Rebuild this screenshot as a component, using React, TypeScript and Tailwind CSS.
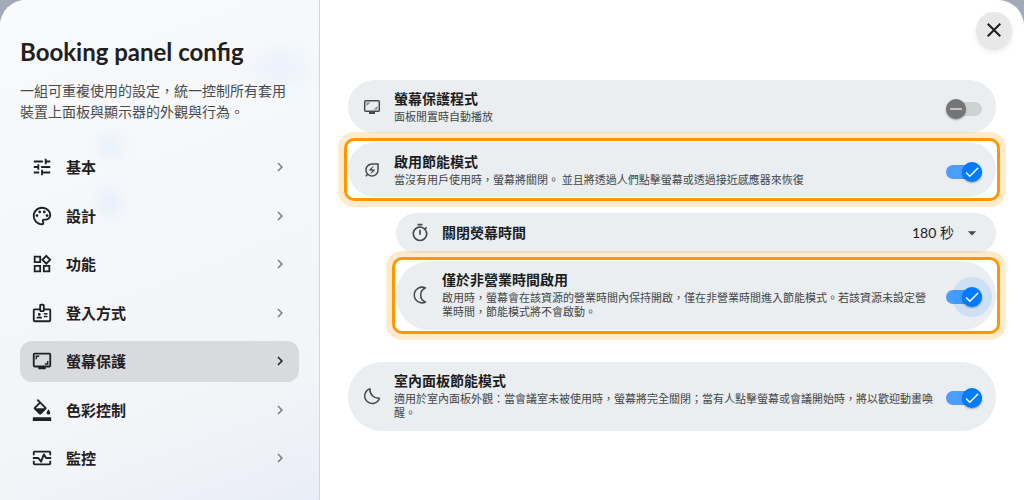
import React, { useState } from "react";
import clsx from "clsx";
import {
	MdArrowDropDown,
	MdCheck,
	MdChevronRight,
	MdClose,
	MdFormatColorFill,
	MdOutlineBadge,
	MdOutlineEnergySavingsLeaf,
	MdOutlinePalette,
	MdOutlineScreenshotMonitor,
	MdOutlineTimer,
	MdOutlineWidgets,
	MdRemove,
	MdTune,
} from "react-icons/md";

type IconProps = { className?: string };

const MonitoringIcon = ({ className }: IconProps) => (
	<svg viewBox="0 0 24 24" fill="none" stroke="currentColor" strokeWidth="2" className={className}>
		<path d="M3 9V6a1 1 0 0 1 1-1h16a1 1 0 0 1 1 1v3M3 15v3a1 1 0 0 0 1 1h16a1 1 0 0 0 1-1v-3" />
		<path d="M2 12h6l3 4 3-8 2.500 4H22" strokeLinejoin="round" />
	</svg>
);

const MonitorIcon = ({ className }: IconProps) => (
	<svg viewBox="0 0 20 20" fill="none" stroke="currentColor" className={className}>
		<rect x="2.700" y="3.700" width="14.600" height="10.600" rx="1" strokeWidth="1.500" />
		<path d="M4.500 5.500h4l-4 3.500zM15.500 12.500h-4l4-3.500z" fill="currentColor" stroke="none" opacity="0.6" />
		<path d="M7 16h6" strokeWidth="2" />
	</svg>
);

const NightIcon = ({ className }: IconProps) => (
	<svg viewBox="0 0 20 20" fill="none" stroke="currentColor" strokeWidth="1.5" strokeLinejoin="round" className={className}>
		<path d="M15.500 3A7.800 7.800 0 1 0 15.500 17A7.500 7.500 0 0 1 15.500 3z" />
	</svg>
);

const MoonIcon = ({ className }: IconProps) => (
	<svg viewBox="0 0 20 20" fill="none" stroke="currentColor" strokeWidth="1.5" strokeLinejoin="round" className={className}>
		<path d="M8 2.800A7.500 7.500 0 1 0 17.400 12.200A8.500 8.500 0 0 1 8 2.800z" />
	</svg>
);

const LeafIcon = ({ className }: IconProps) => (
	<MdOutlineEnergySavingsLeaf className={clsx("p-px", className)} />
);

const navItems = [
	{ name: "基本", hash: "#basic", Icon: MdTune },
	{ name: "設計", hash: "#design", Icon: MdOutlinePalette },
	{ name: "功能", hash: "#features", Icon: MdOutlineWidgets },
	{ name: "登入方式", hash: "#login", Icon: MdOutlineBadge },
	{ name: "螢幕保護", hash: "#screensaver", Icon: MdOutlineScreenshotMonitor },
	{ name: "色彩控制", hash: "#colors", Icon: MdFormatColorFill },
	{ name: "監控", hash: "#monitoring", Icon: MonitoringIcon },
];

function Sidebar() {
	const [active, setActive] = useState("#screensaver");

	return (
		<aside className="relative w-80 shrink-0 overflow-hidden border-r border-[#d3d5d9] bg-linear-160 from-[#f9fafb] via-[#f3f4f8] via-80% to-[#e9edf7] px-5 pt-9">
			<div className="absolute top-14 left-64 h-6 w-12 rounded-full bg-blue-200/30 blur-md"></div>
			<div className="absolute top-34 left-25 size-5 rounded-full bg-blue-200/35 blur-sm"></div>
			<div className="absolute top-48 left-25 size-5 rounded-full bg-blue-200/40 blur-sm"></div>

			<div className="relative">
				<h1 className="text-2xl font-bold text-[#1f2022]">Booking panel config</h1>
				<p className="mt-3 text-sm leading-[21px] text-[#4a4b4e]">
					一組可重複使用的設定，統一控制所有套用裝置上面板與顯示器的外觀與行為。
				</p>
				<nav className="mt-[25px] flex flex-col gap-2">
					{navItems.map(({ name, hash, Icon }) => (
						<a
							key={hash}
							href={hash}
							onClick={() => setActive(hash)}
							className={clsx(
								"flex items-center rounded-xl py-[9px] pr-[10px] pl-[11px] text-[15px] leading-normal font-bold text-[#1f2022]",
								active === hash && "bg-[#d9dadd]"
							)}
						>
							<Icon className="mr-[13px] size-[22px]" />
							{name}
							<MdChevronRight
								className={clsx("ml-auto size-[18px]", active !== hash && "text-[#7c7d80]")}
							/>
						</a>
					))}
				</nav>
			</div>
		</aside>
	);
}

type SwitchProps = { id: string; defaultOn?: boolean; focused?: boolean };

function Switch({ id, defaultOn = false, focused = false }: SwitchProps) {
	const [on, setOn] = useState(defaultOn);

	return (
		<label htmlFor={id} className="relative mt-[5px] flex h-5 w-9 shrink-0 cursor-pointer items-center">
			<input
				id={id}
				type="checkbox"
				role="switch"
				aria-labelledby={`${id}-title`}
				checked={on}
				onChange={() => setOn(!on)}
				className="sr-only"
			/>
			<span className={clsx("h-[14px] w-full rounded-full", on ? "bg-[#4a9eff]" : "bg-[#cfd2d3]")}></span>
			{focused && (
				<span className="absolute -top-[10px] -right-[10px] size-10 rounded-full bg-[#007aff]/12"></span>
			)}
			<span
				className={clsx(
					"absolute top-0 flex size-5 items-center justify-center rounded-full shadow-[0_1px_2px_rgba(0,0,0,0.35)]",
					on ? "right-0 bg-[#007aff] text-white" : "left-0 bg-[#757575] text-[#e0e0e0]"
				)}
			>
				{on ? <MdCheck className="size-[18px]" /> : <MdRemove className="size-5" />}
			</span>
		</label>
	);
}

type SettingProps = {
	id: string;
	Icon: React.ComponentType<IconProps>;
	title: string;
	text: string;
	defaultOn?: boolean;
	focused?: boolean;
	className?: string;
};

function Setting({ id, Icon, title, text, defaultOn, focused, className }: SettingProps) {
	return (
		<div className={clsx("flex items-center rounded-[34px] bg-[#eaeef1] px-[14px] pt-2", className)}>
			<Icon className="mt-[2px] mr-3 size-5 shrink-0 text-[#47494b]" />
			<div className="mr-3 flex-1">
				<h2 id={`${id}-title`} className="text-sm leading-[22px] font-bold text-[#1c1d1f]">
					{title}
				</h2>
				<p className="text-[11px] leading-[14px] text-[#444648]">{text}</p>
			</div>
			<Switch id={id} defaultOn={defaultOn} focused={focused} />
		</div>
	);
}

function Highlight({ children }: { children: React.ReactNode }) {
	return (
		<div className="-mx-1 rounded-[10px] border-3 border-[#ff9800] p-px shadow-[0_0_0_6px_rgba(255,152,0,0.2)]">
			{children}
		</div>
	);
}

export default function App() {
	const [seconds, setSeconds] = useState("180");

	return (
		<div className="min-h-screen bg-[#a3abba] font-[Lato,'Noto_Sans_CJK_TC',sans-serif]">
			<div className="relative flex min-h-screen overflow-hidden rounded-t-[26px] bg-white">
				<Sidebar />
				<button
					aria-label="關閉"
					className="absolute top-3 right-3 flex size-9 cursor-pointer items-center justify-center rounded-full bg-[#e8e8e8] text-[#1c1d1f] shadow-md"
				>
					<MdClose className="size-6" />
				</button>
				<main className="flex-1 px-7 pt-20">
					<Setting
						id="screensaver"
						Icon={MonitorIcon}
						title="螢幕保護程式"
						text="面板閒置時自動播放"
						className="pb-[9px]"
					/>
					<div className="mt-[5px]">
						<Highlight>
							<Setting
								id="energy"
								Icon={LeafIcon}
								title="啟用節能模式"
								text="當沒有用戶使用時，螢幕將關閉。 並且將透過人們點擊螢幕或透過接近感應器來恢復"
								defaultOn
								className="pt-[9px] pb-[10px]"
							/>
						</Highlight>
					</div>
					<div className="mt-3 ml-12">
						<div className="flex h-10 items-center rounded-full bg-[#eaeef1] px-[14px]">
							<MdOutlineTimer className="mr-3 size-5 shrink-0 text-[#47494b]" />
							<label htmlFor="timeout" className="flex-1 text-sm font-bold text-[#1c1d1f]">
								關閉熒幕時間
							</label>
							<div className="relative flex items-center">
								<select
									id="timeout"
									value={seconds}
									onChange={(e) => setSeconds(e.target.value)}
									className="cursor-pointer appearance-none bg-transparent pr-7 text-sm text-[#1c1d1f]"
								>
									<option value="180">180 秒</option>
									<option value="300">300 秒</option>
									<option value="600">600 秒</option>
								</select>
								<MdArrowDropDown className="pointer-events-none absolute right-0 size-5 text-[#47494b]" />
							</div>
						</div>
						<div className="mt-1">
							<Highlight>
								<Setting
									id="off-hours"
									Icon={NightIcon}
									title="僅於非營業時間啟用"
									text="啟用時，螢幕會在該資源的營業時間內保持開啟，僅在非營業時間進入節能模式。若該資源未設定營業時間，節能模式將不會啟動。"
									defaultOn
									focused
									className="pb-[11px]"
								/>
							</Highlight>
						</div>
					</div>
					<div className="mt-7">
						<Setting
							id="room-panel"
							Icon={MoonIcon}
							title="室內面板節能模式"
							text="適用於室內面板外觀：當會議室未被使用時，螢幕將完全關閉；當有人點擊螢幕或會議開始時，將以歡迎動畫喚醒。"
							defaultOn
							className="pb-[11px]"
						/>
					</div>
				</main>
			</div>
		</div>
	);
}
